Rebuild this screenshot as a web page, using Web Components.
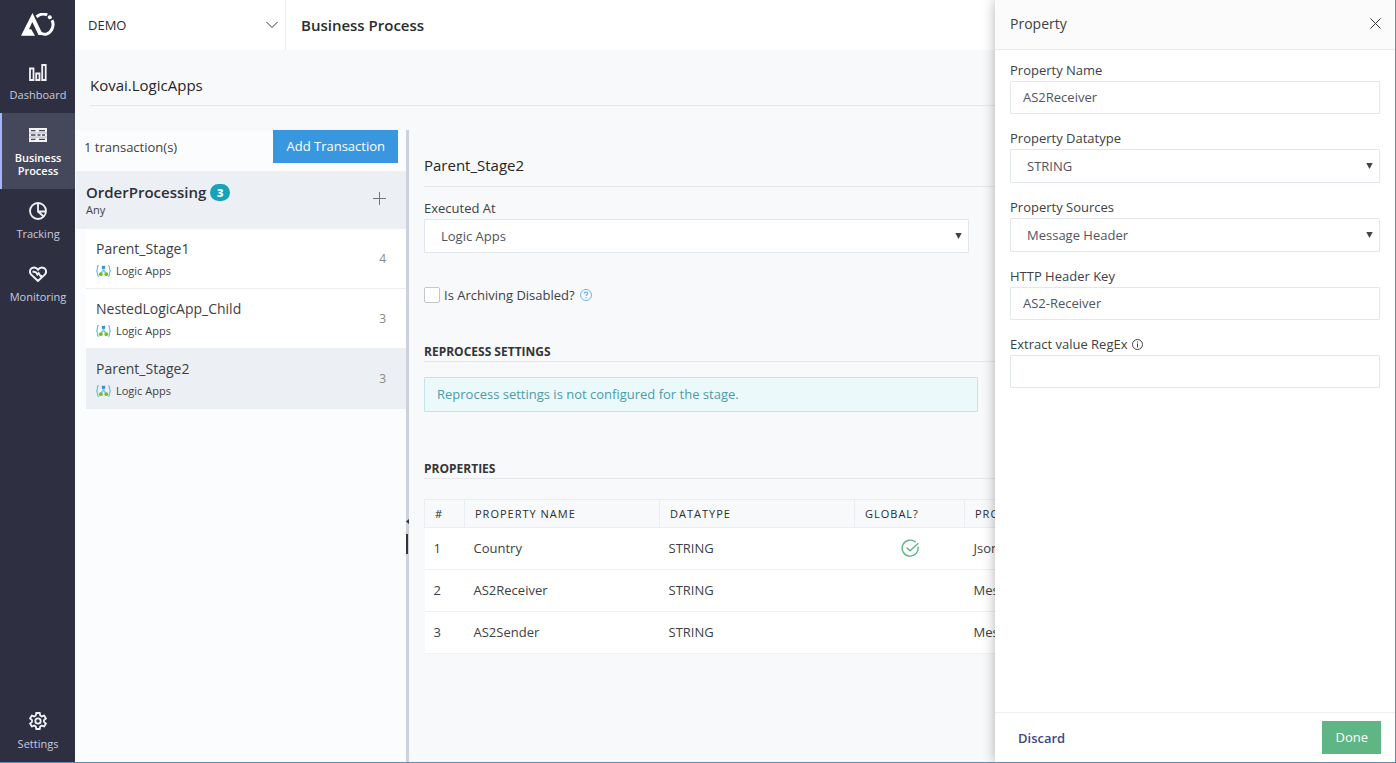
<!DOCTYPE html>
<html lang="en">
<head>
<meta charset="utf-8">
<title>Business Process</title>
<style>
html, body { margin: 0; }
body { font: 13px/20px "Open Sans", "Noto Sans", sans-serif; color: #3e4044; background: #f8f9fb; }
</style>
</head>
<body>
<app-shell>
  <nav-rail slot="nav">
    <nav-item icon="dashboard">Dashboard</nav-item>
    <nav-item icon="process" active>Business Process</nav-item>
    <nav-item icon="tracking">Tracking</nav-item>
    <nav-item icon="monitoring">Monitoring</nav-item>
    <nav-item icon="settings" slot="foot">Settings</nav-item>
  </nav-rail>
  <top-bar slot="top">Business Process</top-bar>
  <page-heading>Kovai.LogicApps</page-heading>
  <split-view>
    <transaction-panel slot="side">
      <transaction-group name="OrderProcessing" count="3" filter="Any">
        <stage-item count="4">Parent_Stage1</stage-item>
        <stage-item count="3">NestedLogicApp_Child</stage-item>
        <stage-item count="3" active>Parent_Stage2</stage-item>
      </transaction-group>
    </transaction-panel>
    <stage-detail></stage-detail>
  </split-view>
  <property-drawer slot="drawer">
    <form-field label="Property Name" value="AS2Receiver"></form-field>
    <form-field label="Property Datatype" value="STRING" kind="select"></form-field>
    <form-field label="Property Sources" value="Message Header" kind="select"></form-field>
    <form-field label="HTTP Header Key" value="AS2-Receiver"></form-field>
    <form-field label="Extract value RegEx" value="" info></form-field>
  </property-drawer>
</app-shell>

<script>
const base = `*, *::before, *::after { box-sizing: border-box; }
button, input, select { font: inherit; color: inherit; margin: 0; border-radius: 0; }
button { border: 0; background: none; padding: 0; cursor: pointer; }
a { color: inherit; text-decoration: none; }
h1, h2, h3, p { margin: 0; }
svg { display: block; flex: none; }`;

function define(name, render) {
  customElements.define(name, class extends HTMLElement {
    constructor() {
      super();
      this.attachShadow({ mode: 'open' });
    }
    connectedCallback() {
      const t = document.createElement('template');
      t.innerHTML = `<style>${base}</style>` + render(this);
      this.shadowRoot.replaceChildren(t.content.cloneNode(true));
    }
  });
}

const icons = {
  dashboard: `<path d="M1 5.5h3.5V17H1zM7.2 10.5h3.3V17H7.2zM13.2 2h3.5v15h-3.5z"/>`,
  process: `<path fill="#f2f2f6" stroke="none" d="M0 2h18v14H0z"/><path stroke="#45475a" stroke-width="1.300" d="M2 4.700h4.500M10 4.700h6M2 9h4.500M8.500 9h3M13 9h3M2 13.300h4.500M10 13.300h6"/><path stroke="#8a8b98" stroke-width=".6" d="M0 6.900h18M0 11.100h18"/>`,
  tracking: `<circle cx="9" cy="9" r="8"/><path d="M9 1v8.500h8M9 9.500l5.600 5"/>`,
  monitoring: `<path stroke-width="2" d="M9 16 2 9.400C.2 7.300.8 4.300 2.800 3.200 5 2 7.400 2.500 9 4.600c1.600-2.100 4-2.600 6.200-1.400 2 1.100 2.600 4.100.8 6.200z"/><path stroke-width="1.800" d="M3.500 6.500 7 7.300 8.300 9.600 9.600 8l2 3.300 1.500-.8"/>`,
  settings: `<path d="M7.300 1h3.400l.5 2.500 1.500.9 2.500-.8 1.700 2.900L15 8.200v1.700l1.900 1.600-1.700 3-2.500-.9-1.500.9-.5 2.500H7.300l-.5-2.500-1.500-.9-2.500.9-1.700-3L3 9.900V8.200L1.100 6.500l1.700-2.900 2.500.8 1.500-.9z"/><circle cx="9" cy="9" r="2.700"/>`
};

define('app-shell', () => `
<style>
:host { display: grid; grid-template-columns: 75px minmax(0, 1fr); min-height: 100vh; position: relative; overflow: hidden;
  border: solid #5b90b5; border-width: 0 1px 1px 0; box-sizing: border-box; }
main { display: flex; flex-direction: column; min-width: 0; }
</style>
<slot name="nav"></slot>
<main><slot name="top"></slot><slot></slot></main>
<slot name="drawer"></slot>`);

define('nav-rail', () => `
<style>
:host { display: flex; flex-direction: column; background: #2e3041; }
.logo { height: 50px; display: grid; place-items: center; }
nav { flex: 1; display: flex; flex-direction: column; }
.foot { margin-top: auto; }
</style>
<a class="logo" href="#" aria-label="Home"><svg width="36" height="24" viewBox="0 0 36 24" fill="none" stroke="#fff">
<path fill="#fff" fill-rule="evenodd" stroke="none" d="M12.500 0 23 22h-4.500L12.300 9 9 16.300l2.200 0L15 22.800H1z"/>
<path stroke-width="3" d="M16.500 3.800c3.500-2.800 7.800-3.200 10.700-1.800M32 7.200c2.700 5-.2 11.800-5 13.600-2.300.8-4.500.4-6.500-.8"/><circle cx="29.800" cy="4.300" r="2" fill="#fff" stroke="none"/></svg></a>
<nav><slot></slot><div class="foot"><slot name="foot"></slot></div></nav>`);

define('nav-item', el => `
<style>
:host { display: block; }
a { display: flex; flex-direction: column; align-items: center; gap: 7px; padding: 13px 2px 12px 3px; font-size: 11px; line-height: 13px; text-align: center; color: #c8cade; }
:host([active]) a { background: #45475a; box-shadow: inset 2px 0 #a5b4fc; color: #fff; font-weight: 600; }
</style>
<a href="#"><svg width="18" height="18" viewBox="0 0 18 18" fill="none" stroke="#f2f2f6" stroke-width="1.800">${icons[el.getAttribute('icon')]}</svg><span><slot></slot></span></a>`);

define('top-bar', () => `
<style>
:host { display: flex; height: 50px; background: #fff; color: #2b2c30; }
.tenant { display: grid; width: 211px; border-right: 1px solid #ecedf2; }
.tenant > * { grid-area: 1 / 1; }
select { appearance: none; border: 0; background: none; padding: 0 40px 0 13px; }
svg { place-self: center end; margin-right: 7px; pointer-events: none; }
h1 { align-self: center; padding-left: 15px; font-size: 15px; font-weight: 600; }
</style>
<div class="tenant"><select aria-label="Tenant"><option>DEMO</option></select>
<svg width="12" height="8" viewBox="0 0 12 8" fill="none" stroke="#333"><path d="m.5 1 5.500 5.500L11.500 1"/></svg></div>
<h1><slot></slot></h1>`);

define('page-heading', () => `
<style>
:host { display: block; padding: 25px 15px 24px; }
h2 { font-size: 15px; font-weight: 400; padding-bottom: 10px; border-bottom: 1px solid #e6e7ec; color: #242528; }
</style>
<h2><slot></slot></h2>`);

define('split-view', () => `
<style>
:host { display: grid; grid-template-columns: 331px 3px minmax(0, 1fr); flex: 1; }
.split { background: #cdd2de; position: relative; }
button { position: absolute; left: 0; bottom: 208px; width: 3px; display: grid; gap: 10px; overflow: hidden; }
i { width: 2px; height: 20px; background: #333; }
</style>
<slot name="side"></slot>
<div class="split"><button aria-label="Collapse panel"><svg width="3" height="5" viewBox="0 0 3 5" fill="#333"><path d="M3 0v5L0 2.500z"/></svg><i></i></button></div>
<slot></slot>`);

define('transaction-panel', () => `
<style>
:host { display: block; background: #fafcfd; }
header { display: flex; justify-content: space-between; align-items: flex-start; padding: 0 8px 8px 9px; }
span { padding-top: 7px; }
button { height: 33px; padding: 0 13px 2px; background: #3997df; color: #fff; font-weight: 500; }
</style>
<header><span>1 transaction(s)</span><button>Add Transaction</button></header>
<slot></slot>`);

define('transaction-group', el => `
<style>
:host { display: block; padding-left: 1px; }
header { display: flex; align-items: center; justify-content: space-between; height: 58px; padding: 0 20px 0 10px; background: #eceff4; }
h3 { display: flex; align-items: center; gap: 4px; font-size: 15px; font-weight: 600; line-height: 20px; color: #2e3034; }
b { display: grid; place-items: center; width: 20px; height: 17px; border-radius: 9px; background: #18a2b8; color: #fff; font-size: 11px; line-height: 17px; }
p { font-size: 11px; line-height: 16px; }
header svg { margin-bottom: 4px; }
.items { padding-left: 10px; }
</style>
<header><div><h3>${el.getAttribute('name')} <b>${el.getAttribute('count')}</b></h3><p>${el.getAttribute('filter')}</p></div>
<button aria-label="Add stage"><svg width="13" height="13" viewBox="0 0 13 13" stroke="#777"><path d="M6.500 0v13M0 6.500h13"/></svg></button></header>
<div class="items"><slot></slot></div>`);

define('stage-item', el => `
<style>
:host { display: block; }
a { display: flex; justify-content: space-between; align-items: center; height: 60px; padding: 0 20px 0 10px; background: #fff; border-bottom: 1px solid #eceef2; }
:host([active]) a { background: #eceff4; }
.name { font-size: 14px; line-height: 20px; }
.kind { display: flex; gap: 5px; align-items: center; padding-top: 4px; font-size: 11px; line-height: 16px; }
.count { font-size: 12px; color: #888; }
</style>
<a href="#"><div><div class="name"><slot></slot></div>
<div class="kind"><svg width="15" height="12" viewBox="0 0 15 12" fill="none"><path stroke="#65c3ea" stroke-width="1.300" d="M2.800.6C1.500.6 1.500 1.200 1.500 3c0 2-.1 2.600-1 3 .9.4 1 1 1 3 0 1.800 0 2.400 1.300 2.400M12.200.6c1.300 0 1.300.6 1.300 2.400 0 2 .1 2.600 1 3-.9.4-1 1-1 3 0 1.800 0 2.400-1.300 2.400"/><path stroke="#84c9e5" stroke-width="1.600" d="M7.500 2.500v2.300L4.800 9M7.500 4.800 10.200 9"/><path fill="#3f8fd5" d="M5.800.8h3.400v3H5.800z"/><circle cx="4.800" cy="9.200" r="1.900" fill="#7fba22"/><circle cx="10.300" cy="9.200" r="1.900" fill="#7fba22"/></svg>Logic Apps</div></div>
<span class="count">${el.getAttribute('count')}</span></a>`);

define('stage-detail', () => `
<style>
:host { display: block; padding: 25px 15px 20px; }
h2 { font-size: 15px; font-weight: 400; line-height: 20px; padding-bottom: 11px; border-bottom: 1px solid #e6e7ec; color: #242528; }
form-field { width: 57%; padding-top: 12px; }
.check { display: flex; align-items: center; gap: 4px; height: 20px; margin-top: 32px; }
.check svg { margin-left: 1px; }
input { appearance: none; width: 16px; height: 16px; border: 1px solid #c4c6ca; border-radius: 2px; background: #fff; }
h3 { font-size: 12px; font-weight: 700; line-height: 18px; border-bottom: 1px solid #e6e7ec; color: #333539; }
.reprocess { margin-top: 38px; }
.note { width: 58%; margin-top: 15px; height: 35px; padding: 0 12px; line-height: 33px; border: 1px solid #c5e4e9; border-radius: 1px; background: #ecf9fb; color: #4b9ba8; }
.properties { margin-top: 48px; }
table { width: 100%; margin-top: 20px; border-collapse: collapse; table-layout: fixed; }
th { height: 28px; padding: 0 0 0 10px; border: 1px solid #ecedf4; text-align: left; font-size: 11px; line-height: 20px; font-weight: 500; letter-spacing: 1px; color: #2b2c30; }
td { height: 42px; padding: 0 9px 2px; background: #fff; border-bottom: 1px solid #f0f1f4; }
td svg { margin: 0 auto; }
.n { width: 40px; } .p { width: 195px; } .g { width: 110px; }
</style>
<h2>Parent_Stage2</h2>
<form-field label="Executed At" value="Logic Apps" kind="select"></form-field>
<div class="check"><input type="checkbox" id="arch"><label for="arch">Is Archiving Disabled?</label>
<svg width="12" height="12" viewBox="0 0 12 12" fill="none" stroke="#6db5ea"><circle cx="6" cy="6" r="5.500"/><path stroke-width="1.200" d="M4.300 4.800C4.300 2.500 7.700 2.700 7.700 4.600 7.700 5.700 6 5.700 6 7M6 8v1.200"/></svg></div>
<h3 class="reprocess">REPROCESS SETTINGS</h3>
<p class="note">Reprocess settings is not configured for the stage.</p>
<h3 class="properties">PROPERTIES</h3>
<table>
<colgroup><col class="n"><col class="p"><col class="p"><col class="g"><col></colgroup>
<thead><tr><th>#</th><th>PROPERTY NAME</th><th>DATATYPE</th><th>GLOBAL?</th><th>PROPERTY SOURCE</th></tr></thead>
<tbody>
<tr><td>1</td><td>Country</td><td>STRING</td><td><svg width="18" height="18" viewBox="0 0 18 18" fill="none" stroke="#5db583" stroke-width="1.400"><path d="M14.600 3.300A8 8 0 1 0 17 7.600M5.500 8.500 9 11.800 17.300 4.300"/></svg></td><td>Json</td></tr>
<tr><td>2</td><td>AS2Receiver</td><td>STRING</td><td></td><td>Message Header</td></tr>
<tr><td>3</td><td>AS2Sender</td><td>STRING</td><td></td><td>Message Header</td></tr>
</tbody></table>`);

define('form-field', el => {
  const value = el.getAttribute('value');
  const select = el.getAttribute('kind') === 'select';
  const info = el.hasAttribute('info') ? `<svg width="11" height="11" viewBox="0 0 11 11" fill="none" stroke="#444"><circle cx="5.500" cy="5.500" r="5"/><path d="M5.500 2.500v1M5.500 4.500v4"/></svg>` : '';
  return `
<style>
:host { display: block; }
.label { display: flex; align-items: center; gap: 4px; line-height: 18px; padding-bottom: 2px; }
.box { display: grid; align-items: center; }
.box > * { grid-area: 1 / 1; }
input, select { width: 100%; border: 1px solid #e2e7ef; border-radius: 1px; background: #fff; color: #4f5560; }
input { height: 33px; padding: 0 12px 1px; }
select { height: 34px; padding: 0 16px; appearance: none; }
.box svg { justify-self: end; margin-right: 7px; pointer-events: none; }
</style>
<div class="label"><label for="f">${el.getAttribute('label')}</label>${info}</div>
<div class="box">${select
  ? `<select id="f"><option>${value}</option></select><svg width="7" height="6" viewBox="0 0 7 6" fill="#3f444c"><path d="M.3 0h6.400L3.500 6z"/></svg>`
  : `<input id="f" type="text" value="${value}">`}</div>`;
});

define('property-drawer', () => `
<style>
:host { position: absolute; top: 0; right: 0; bottom: 0; width: 400px; display: flex; flex-direction: column; background: #fff; box-shadow: 0 0 12px rgba(0, 0, 0, .3); }
header { display: flex; align-items: center; justify-content: space-between; height: 50px; padding: 0 14px 2px 15px; background: #fbfbfb; border-bottom: 1px solid #e9eaec; }
h2 { font-size: 14px; font-weight: 400; }
form { flex: 1; display: flex; flex-direction: column; gap: 15px; padding: 11px 15px; }
footer { display: flex; align-items: center; justify-content: space-between; height: 50px; padding: 0 14px 0 23px; border-top: 1px solid #eeeff1; }
.discard { color: #3c4788; font-weight: 600; }
.done { height: 33px; padding: 0 13px 1px; background: #5fb583; color: #fff; font-weight: 500; }
</style>
<header><h2>Property</h2><button aria-label="Close"><svg width="11" height="11" viewBox="0 0 11 11" stroke="#333"><path d="m.5.5 10 10M10.500.5l-10 10"/></svg></button></header>
<form><slot></slot></form>
<footer><button class="discard">Discard</button><button class="done">Done</button></footer>`);
</script>
</body>
</html>
